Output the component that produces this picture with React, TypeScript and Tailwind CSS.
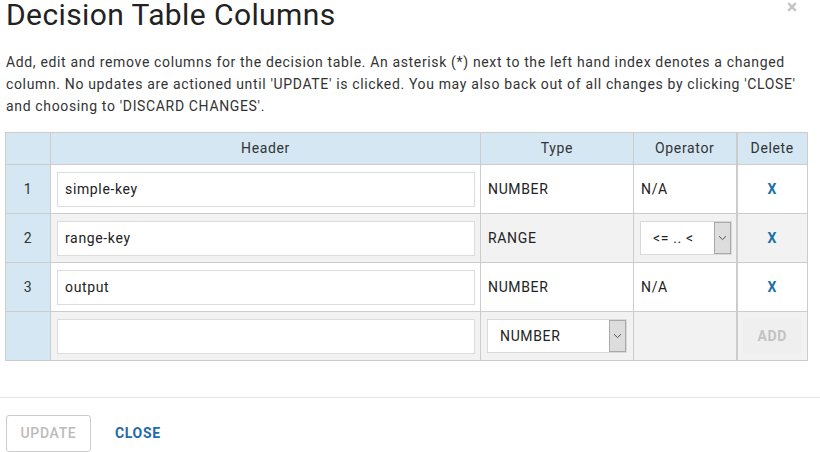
import React from "react";

const Chevron = () => (
  <svg width="9" height="6" viewBox="0 0 9 6" fill="none">
    <path d="M1 1.2 L4.5 4.6 L8 1.2" stroke="#555" strokeWidth="1" />
  </svg>
);

function SelectBox({ value, width }: { value: string; width: string }) {
  return (
    <div className={`flex h-[34px] items-stretch border border-[#d9d9d9] bg-white ${width}`}>
      <div className="flex flex-1 items-center pl-[12px] text-[14px] text-[#222]">{value}</div>
      <div className="flex w-[17px] items-center justify-center border border-[#a9a9a9] bg-[#dddddd]">
        <Chevron />
      </div>
    </div>
  );
}

function TextInput({ value }: { value: string }) {
  return (
    <div className="flex h-[35px] items-center border border-[#dcdcdc] bg-white pl-[7px] text-[14px] text-[#222]">
      {value}
    </div>
  );
}

export default function App() {
  const rows = [
    { idx: "1", name: "simple-key", type: "NUMBER", op: "N/A", bg: "bg-white" },
    { idx: "2", name: "range-key", type: "RANGE", op: "select", bg: "bg-[#f2f2f2]" },
    { idx: "3", name: "output", type: "NUMBER", op: "N/A", bg: "bg-white" },
  ];
  return (
    <div
      className="relative h-[452px] w-[820px] overflow-hidden bg-white tracking-[0.65px] text-[#333]"
      style={{ fontFamily: "Roboto, 'Liberation Sans', sans-serif" }}
    >
      <div className="px-[6px] pt-[1px]">
        <h1 className="m-0 text-[30px] font-normal leading-[34px] tracking-[0.4px] text-[#222] -mt-[3px]">Decision Table Columns</h1>
        <p className="mt-[19px] w-[808px] text-[14px] leading-[22px] text-[#333]">
          Add, edit and remove columns for the decision table. An asterisk (*) next to the left hand index denotes a
          changed column. No updates are actioned until 'UPDATE' is clicked. You may also back out of all changes by
          clicking 'CLOSE' and choosing to 'DISCARD CHANGES'.
        </p>
      </div>
      <svg className="absolute left-[787px] top-[2px]" width="10" height="10" viewBox="0 0 10 10">
        <path d="M1.2 1.2 L8.8 8.8 M8.8 1.2 L1.2 8.8" stroke="#c4c4c4" strokeWidth="2.4" strokeLinecap="butt" />
      </svg>

      <div className="mt-[15px] pl-[5px]">
        <table className="table-fixed border-collapse text-[14px] text-[#222]" style={{ width: 802 }}>
          <colgroup>
            <col style={{ width: 45 }} />
            <col style={{ width: 430 }} />
            <col style={{ width: 153 }} />
            <col style={{ width: 103 }} />
            <col style={{ width: 71 }} />
          </colgroup>
          <thead>
            <tr className="h-[32px] bg-[#d4e7f3]">
              <th className="border border-[#cccccc] font-normal"></th>
              <th className="border border-[#cccccc] text-center font-normal text-[#333]">Header</th>
              <th className="border border-[#cccccc] text-center font-normal text-[#333]">Type</th>
              <th className="border border-[#cccccc] text-center font-normal text-[#333]">Operator</th>
              <th className="border border-[#cccccc] border-l-2 text-center font-normal text-[#333]">Delete</th>
            </tr>
          </thead>
          <tbody>
            {rows.map((r) => (
              <tr key={r.idx} className={`h-[49px] ${r.bg}`}>
                <td className="border border-[#cccccc] bg-[#d4e7f3] text-center text-[#333]">{r.idx}</td>
                <td className="border border-[#cccccc] pl-[6px] pr-[5px]">
                  <TextInput value={r.name} />
                </td>
                <td className="border border-[#cccccc] pl-[7px]">{r.type}</td>
                <td className="border border-[#cccccc] pl-[6px] pr-[6px]">
                  {r.op === "select" ? <SelectBox value="<= .. <" width="w-[92px]" /> : <span className="pl-[1px]">{r.op}</span>}
                </td>
                <td className="border border-[#cccccc] border-l-2 text-center font-bold text-[#1d6fa5]">X</td>
              </tr>
            ))}
            <tr className="h-[49px] bg-[#f2f2f2]">
              <td className="border border-[#cccccc] bg-[#d4e7f3]"></td>
              <td className="border border-[#cccccc] pl-[6px] pr-[5px]">
                <TextInput value="" />
              </td>
              <td className="border border-[#cccccc] pl-[6px] pr-[6px]">
                <SelectBox value="NUMBER" width="w-[140px]" />
              </td>
              <td className="border border-[#cccccc]"></td>
              <td className="border border-[#cccccc] border-l-2 px-[5px]">
                <div className="flex h-[36px] items-center justify-center rounded-[3px] bg-[#efefef] text-[14px] font-bold text-[#c2c2c2]">
                  ADD
                </div>
              </td>
            </tr>
          </tbody>
        </table>
      </div>

      <div className="mt-[36px] border-t border-[#e5e5e5]"></div>
      <div className="flex items-center gap-[24px] pl-[6px] pt-[17px]">
        <button className="h-[37px] w-[85px] rounded-[3px] border border-[#cccccc] bg-white text-[14px] font-medium text-[#bbbbbb]">
          UPDATE
        </button>
        <button className="text-[14px] font-bold text-[#1f6aa8]">CLOSE</button>
      </div>
    </div>
  );
}
